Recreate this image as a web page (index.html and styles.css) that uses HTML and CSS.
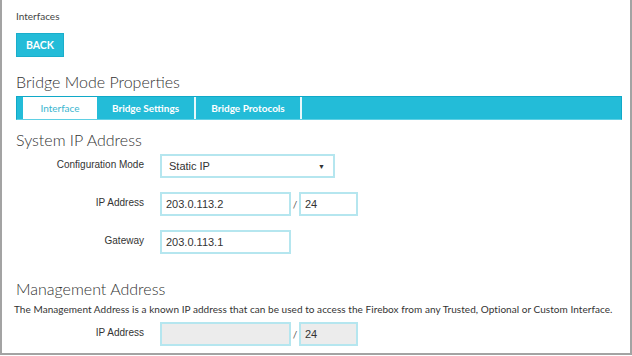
FILE: index.html
```html
<!DOCTYPE html>
<html lang="en">
<head>
    <meta charset="UTF-8">
    <title>Bridge Mode Properties</title>
    <link rel="stylesheet" href="styles.css">
</head>
<body>
    <div class="page">
        <div class="crumb">Interfaces</div>
        <button class="back">BACK</button>

        <h1>Bridge Mode Properties</h1>

        <!-- Tabs -->
        <div class="tabs">
            <div class="tab active">Interface</div>
            <div class="tab">Bridge Settings</div>
            <div class="tab">Bridge Protocols</div>
        </div>

        <!-- System IP -->
        <h2 class="section">System IP Address</h2>
        <div class="form">
            <div class="row">
                <label>Configuration Mode</label>
                <div class="select">Static IP <span class="arrow">&#9660;</span></div>
            </div>
            <div class="row">
                <label>IP Address</label>
                <div class="pair">
                    <input class="ip" type="text" value="203.0.113.2">
                    <span class="slash">/</span>
                    <input class="mask" type="text" value="24">
                </div>
            </div>
            <div class="row">
                <label>Gateway</label>
                <input class="ip" type="text" value="203.0.113.1">
            </div>
        </div>

        <!-- Management -->
        <h2 class="section mgmt">Management Address</h2>
        <p class="description">The Management Address is a known IP address that can be used to access the Firebox from any Trusted, Optional or Custom Interface.</p>
        <div class="form">
            <div class="row">
                <label>IP Address</label>
                <div class="pair">
                    <input class="ip disabled" type="text" value="" disabled>
                    <span class="slash">/</span>
                    <input class="mask disabled" type="text" value="24" disabled>
                </div>
            </div>
        </div>
    </div>
</body>
</html>
```

FILE: styles.css
```css
/* General */
body {
    margin: 0;
    padding: 0;
    background: #fff;
    color: #333;
    font-family: Lato, "Open Sans", sans-serif;
}

.page {
    width: 632px;
    height: 355px;
    box-sizing: border-box;
    border-left: 2px solid #a3a3a3;
    border-right: 2px solid #a3a3a3;
    border-bottom: 2px solid #a3a3a3;
    padding: 10px 8px 0 14px;
    overflow: hidden;
}

.crumb {
    font-size: 10px;
    line-height: 12px;
    color: #444;
}

.back {
    display: block;
    margin-top: 11px;
    height: 24px;
    padding: 0 9px;
    background-color: #24bcd8;
    border: 1px solid #1aaecb;
    color: #fff;
    font-family: Lato, sans-serif;
    font-weight: bold;
    font-size: 10.5px;
    cursor: pointer;
}

h1, h2 {
    font-weight: 300;
    font-size: 16px;
    line-height: 20px;
    margin: 0;
    color: #333;
}

h1 {
    margin-top: 15px;
}

/* Tabs */
.tabs {
    display: flex;
    margin-top: 4px;
    height: 24px;
    box-sizing: border-box;
    background-color: #23bcd8;
    border: 1px solid #10a9c8;
    border-bottom: 1px solid #5fd0e4;
    padding-left: 6px;
}

.tab {
    box-sizing: border-box;
    font-size: 10px;
    font-weight: bold;
    color: #fff;
    line-height: 22px;
    text-align: center;
    white-space: nowrap;
    border-right: 2px solid #e8f8fb;
}

.tab.active {
    width: 74px;
    background: #fff;
    color: #3ab5cf;
    font-weight: normal;
    border-right: none;
}

.tab:nth-child(2) { width: 99px; }
.tab:nth-child(3) { width: 106px; }

.section {
    margin-top: 10px;
}

/* Form rows */
.form {
    display: flex;
    flex-direction: column;
    gap: 14px;
    margin-top: 4px;
}

.row {
    display: grid;
    grid-template-columns: 128px auto;
    column-gap: 16px;
    align-items: center;
}

.row label {
    text-align: right;
    font-family: "Liberation Sans", Arial, sans-serif;
    font-size: 10px;
    color: #333;
    padding-bottom: 3px;
}

.select, input {
    box-sizing: border-box;
    height: 24px;
    border: 2px solid #b5e6ef;
    font-family: "Liberation Sans", Arial, sans-serif;
    font-size: 11px;
    color: #333;
    background: #fff;
    padding: 0 4px;
    margin: 0;
    outline: none;
}

.select {
    width: 175px;
    display: flex;
    align-items: center;
    justify-content: space-between;
    padding: 0 8px 0 7px;
}

.arrow {
    font-size: 7px;
}

.pair {
    display: flex;
    align-items: center;
}

.ip {
    width: 131px;
}

.mask {
    width: 59px;
}

.slash {
    font-size: 10px;
    width: 8px;
    text-align: center;
    color: #555;
}

.disabled {
    background: #ececec;
}

.mgmt {
    margin-top: 25px;
}

.description {
    margin: 3px 0 0 -2px;
    font-size: 10px;
    line-height: 14px;
    letter-spacing: 0.05px;
    white-space: nowrap;
}

.description + .form {
    margin-top: 6px;
}
```
